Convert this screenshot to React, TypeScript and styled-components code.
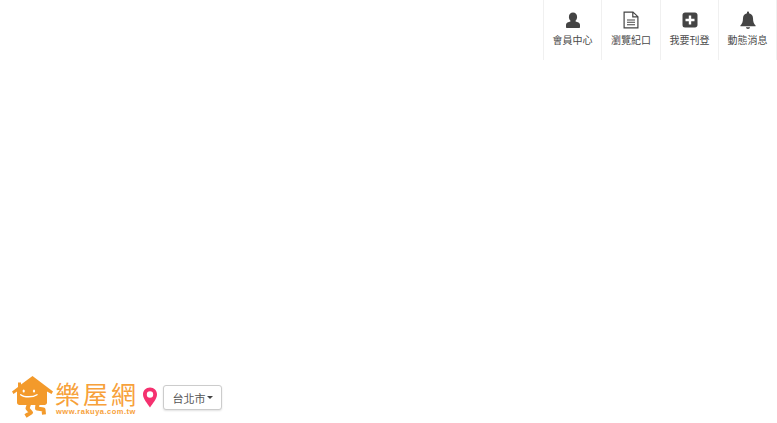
import React from 'react';
import styled, {createGlobalStyle} from 'styled-components';

const GlobalStyle = createGlobalStyle`
  html, body {
    margin: 0;
    padding: 0;
    height: 100%;
    background: #fff;
    overflow: hidden;
  }
  body {
    font-family: "Liberation Sans", "Noto Sans CJK TC", sans-serif;
  }
`;

const Page = styled.div`
  height: 423px;
  display: flex;
  flex-direction: column;
  justify-content: space-between;
`;

const TopNav = styled.nav`
  display: flex;
  justify-content: flex-end;
`;

const NavItem = styled.a`
  width: 58px;
  height: 60px;
  box-sizing: border-box;
  border-left: 1px solid #f0f0f0;
  display: flex;
  flex-direction: column;
  align-items: center;
  color: #444;
  &:nth-child(2) {
    width: 59px;
  }
  &:last-child {
    width: 59px;
    border-right: 1px solid #f0f0f0;
  }
`;

const NavIcon = styled.svg`
  width: 20px;
  height: 20px;
  margin-top: 10px;
  fill: #444;
`;

const NavLabel = styled.span`
  margin-top: 3px;
  font-size: 10px;
  line-height: 15px;
  color: #4a4a4a;
  white-space: nowrap;
`;

const BottomBar = styled.div`
  display: flex;
  align-items: flex-start;
  padding: 0 0 4px 12px;
`;

const Mascot = styled.svg`
  width: 41px;
  height: 43px;
  flex: none;
`;

const Brand = styled.div`
  margin-left: 2px;
  width: 82px;
  display: flex;
  flex-direction: column;
  color: #f7a13a;
`;

const BrandName = styled.div`
  font-family: "Noto Sans CJK TC", sans-serif;
  font-weight: 400;
  font-size: 25px;
  line-height: 30px;
  letter-spacing: 3px;
  white-space: nowrap;
  margin-top: 2px;
`;

const BrandUrl = styled.div`
  font-size: 7.5px;
  font-weight: 700;
  line-height: 10px;
  letter-spacing: 0.5px;
  margin-top: -1px;
  margin-left: 1px;
  white-space: nowrap;
`;

const Pin = styled.svg`
  width: 16px;
  height: 21px;
  margin: 11px 0 0 5px;
  flex: none;
`;

const CityButton = styled.button`
  margin: 9px 0 0 5px;
  width: 59px;
  height: 25px;
  box-sizing: border-box;
  padding: 0;
  background: #fff;
  border: 1px solid #ccc;
  border-radius: 3px;
  box-shadow: 0 1px 2px rgba(0, 0, 0, 0.12);
  font-family: inherit;
  font-size: 11px;
  color: #555;
  display: flex;
  align-items: center;
  justify-content: center;
`;

const Caret = styled.span`
  width: 0;
  height: 0;
  margin-left: 1px;
  border-left: 3px solid transparent;
  border-right: 3px solid transparent;
  border-top: 3px solid #444;
`;

const navItems = [
  {
    label: '會員中心',
    icon: (
      <path d="M10 2.600c2.400 0 4.100 1.900 4.100 4.300 0 1.500-.6 2.900-1.500 3.700v.9c1.900.5 4.400 1.400 4.400 3.300v2.400c0 .4-.3.7-.7.7H3.700c-.4 0-.7-.3-.7-.7v-2.400c0-1.900 2.500-2.800 4.400-3.300v-.9c-.9-.8-1.500-2.200-1.500-3.700 0-2.400 1.700-4.300 4.100-4.300z" />
    )
  },
  {
    label: '瀏覽紀口',
    icon: (
      <path
        fillRule="evenodd"
        d="M2.500 1.500h9.700L17.500 6.400v12.100H2.500V1.500zm1.200 1.200v14.600h12.600V7.400h-5.100V2.700H3.700zm8.700.6v2.900h3.300l-3.300-2.900zM6 9.400h8v1H6v-1zm0 2.400h8v1H6v-1zm0 2.400h8v1H6v-1z"
      />
    )
  },
  {
    label: '我要刊登',
    icon: (
      <path
        fillRule="evenodd"
        d="M5 2.500h10c1.400 0 2.500 1.100 2.500 2.500v10c0 1.400-1.100 2.500-2.500 2.500H5A2.500 2.500 0 0 1 2.500 15V5C2.500 3.600 3.600 2.500 5 2.500zm3.800 3v3.300H5.500v2.400h3.300v3.300h2.400v-3.300h3.300V8.800h-3.300V5.500H8.800z"
      />
    )
  },
  {
    label: '動態消息',
    icon: (
      <path d="M10 1.500c.6 0 1 .4 1 1v.7c2.600.5 4 2.500 4 5.100 0 4 1 5.600 2.600 7.100v.9H2.400v-.9C4 13.900 5 12.300 5 8.300c0-2.600 1.400-4.600 4-5.100v-.7c0-.6.400-1 1-1zM8 17.300h4c0 1.100-.9 1.700-2 1.700s-2-.6-2-1.700z" />
    )
  }
];

const App = () => (
  <Page>
    <GlobalStyle />
    <TopNav>
      {navItems.map((item) => (
        <NavItem key={item.label}>
          <NavIcon viewBox="0 0 20 20">{item.icon}</NavIcon>
          <NavLabel>{item.label}</NavLabel>
        </NavItem>
      ))}
    </TopNav>
    <BottomBar>
      <Mascot viewBox="0 0 41 43">
        {/* house body */}
        <path
          fill="#f39a2b"
          d="M20.500 0 41 15.500 39.500 18 35 15.500V26.500C35 28 34 29 32.500 29H7.500C6 29 5 28 5 26.500V15.500L1.500 18 0 15.500 6 11V6.500H9V8.500z"
        />
        <ellipse cx="11.700" cy="15" rx="1.100" ry="1.500" fill="#fff" />
        <ellipse cx="22" cy="15" rx="1.100" ry="1.500" fill="#fff" />
        <path
          d="M8.700 18.700C12 21.500 21 21.500 25 18.700"
          fill="none"
          stroke="#fff"
          strokeWidth="1.400"
          strokeLinecap="round"
        />
        {/* legs */}
        <path
          d="M17 28 15.500 32.500 19 36.500 13.500 40M25.500 28 25 32.500 31.500 33.500 32 38.500"
          fill="none"
          stroke="#f39a2b"
          strokeWidth="4"
          strokeLinejoin="round"
        />
      </Mascot>
      <Brand>
        <BrandName>樂屋網</BrandName>
        <BrandUrl>www.rakuya.com.tw</BrandUrl>
      </Brand>
      <Pin viewBox="0 0 16 21">
        <path
          fill="#f5316f"
          fillRule="evenodd"
          d="M8 0.500C3.900 0.500 1 3.600 1 7.500 1 12 5.500 16.500 8 20.500 10.500 16.500 15 12 15 7.500 15 3.600 12.100 0.500 8 0.500zM8 4.300A3.200 3.200 0 1 1 8 10.700 3.200 3.200 0 0 1 8 4.300z"
        />
      </Pin>
      <CityButton>
        台北市
        <Caret />
      </CityButton>
    </BottomBar>
  </Page>
);

export default App;
